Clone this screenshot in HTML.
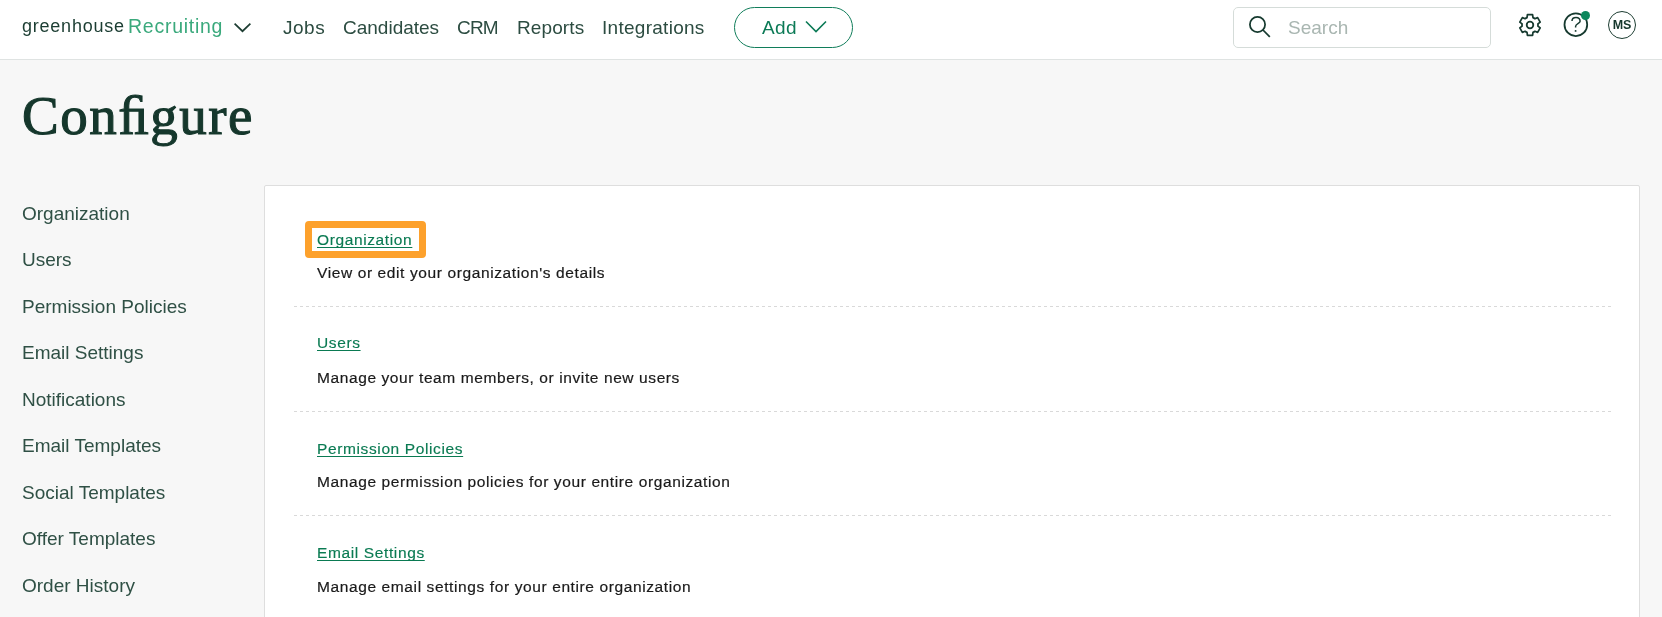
<!DOCTYPE html>
<html><head><meta charset="utf-8">
<style>
*{margin:0;padding:0;box-sizing:border-box}
html,body{width:1662px;height:617px;overflow:hidden;background:#f7f7f7;-webkit-font-smoothing:antialiased;font-family:"Liberation Sans",sans-serif}
.abs{position:absolute;white-space:nowrap;will-change:transform}
#hdr{position:absolute;left:0;top:0;width:1662px;height:60px;background:#fff;border-bottom:1px solid #dfe3e2}
.nav{font-size:19px;color:#2c4c41;line-height:22px;letter-spacing:0.1px}
.side{font-size:19px;color:#2f5045;line-height:22px;letter-spacing:0px}
#card{position:absolute;left:264px;top:185px;width:1376px;height:460px;background:#fff;border:1px solid #dedede;border-radius:2px}
.lnk{font-size:15.5px;color:#0a7a52;-webkit-text-stroke:0.15px #0a7a52;text-decoration:underline;text-underline-offset:2px;text-decoration-skip-ink:none;line-height:18px;letter-spacing:0.62px}
.dsc{font-size:15.5px;color:#1a1a1a;-webkit-text-stroke:0.2px #1a1a1a;line-height:18px;letter-spacing:0.61px}
.dash{position:absolute;left:294px;width:1318px;height:1px;background:repeating-linear-gradient(to right,#d9d9d9 0 3px,transparent 3px 6px)}
</style></head><body>
<div id="hdr">
  <div class="abs" style="left:22px;top:15px;font-size:18px;line-height:22px;color:#1b3d32;letter-spacing:0.77px">greenhouse</div>
  <div class="abs" style="left:128px;top:15px;font-size:19.5px;line-height:23px;color:#3aa97c;letter-spacing:0.74px">Recruiting</div>
  <svg class="abs" style="left:232px;top:20px" width="22" height="16" viewBox="0 0 22 16"><path d="M2.6 3.6 L10.5 11.2 L18.4 3.6" fill="none" stroke="#1d3d32" stroke-width="1.7"/></svg>
  <div class="abs nav" style="left:283px;top:17px;letter-spacing:0.5px">Jobs</div>
  <div class="abs nav" style="left:343px;top:17px;letter-spacing:0px">Candidates</div>
  <div class="abs nav" style="left:457px;top:17px;letter-spacing:-0.8px">CRM</div>
  <div class="abs nav" style="left:517px;top:17px">Reports</div>
  <div class="abs nav" style="left:602px;top:17px;letter-spacing:0.28px">Integrations</div>
  <div class="abs" style="left:734px;top:7px;width:119px;height:41px;border:1.3px solid #107d5a;border-radius:21px"></div>
  <div class="abs" style="left:762px;top:17px;font-size:19px;line-height:22px;color:#0b7a56;letter-spacing:0.4px">Add</div>
  <svg class="abs" style="left:803px;top:18px" width="26" height="18" viewBox="0 0 26 18"><path d="M3 3.5 L13 13.5 L23 3.5" fill="none" stroke="#0b7a56" stroke-width="1.6"/></svg>
  <div class="abs" style="left:1233px;top:7px;width:258px;height:41px;border:1px solid #d5dcd9;border-radius:5px"></div>
  <svg class="abs" style="left:1245px;top:12px" width="30" height="30" viewBox="0 0 30 30"><circle cx="12.5" cy="12.5" r="7.6" fill="none" stroke="#163a2f" stroke-width="1.75"/><path d="M18 18 L24.8 24.8" stroke="#163a2f" stroke-width="1.75"/></svg>
  <div class="abs" style="left:1288px;top:17px;font-size:19px;line-height:22px;color:#a9b6b1;letter-spacing:0px">Search</div>
  <svg class="abs" style="left:1515px;top:10px" width="30" height="30" viewBox="0 0 30 30"><path d="M12.00 7.58 L12.44 4.71 L17.56 4.71 L18.00 7.58 A8.0 8.0 0 0 1 19.93 8.70 L22.63 7.64 L25.19 12.08 L22.92 13.89 A8.0 8.0 0 0 1 22.92 16.11 L25.19 17.92 L22.63 22.36 L19.93 21.30 A8.0 8.0 0 0 1 18.00 22.42 L17.56 25.29 L12.44 25.29 L12.00 22.42 A8.0 8.0 0 0 1 10.07 21.30 L7.37 22.36 L4.81 17.92 L7.08 16.11 A8.0 8.0 0 0 1 7.08 13.89 L4.81 12.08 L7.37 7.64 L10.07 8.70 A8.0 8.0 0 0 1 12.00 7.58 Z" fill="none" stroke="#163a2f" stroke-width="1.75" stroke-linejoin="round"/><circle cx="15" cy="15" r="3.3" fill="none" stroke="#163a2f" stroke-width="1.8"/></svg>
  <svg class="abs" style="left:1560px;top:9px" width="32" height="32" viewBox="0 0 32 32"><circle cx="15.85" cy="15.7" r="11.35" fill="none" stroke="#163a2f" stroke-width="1.8"/><path d="M12 11.9 C12 9.8 13.8 8.4 16 8.4 C18.4 8.4 20.1 10 20.1 12.2 C20.1 14.6 15.6 14.8 15.6 17.4 L15.6 18.6" fill="none" stroke="#163a2f" stroke-width="1.5"/><circle cx="15.6" cy="21.9" r="0.95" fill="#163a2f"/><circle cx="25.5" cy="6.5" r="4.5" fill="#0d875c"/></svg>
  <div class="abs" style="left:1608px;top:11px;width:28px;height:28px;border:1.2px solid #1d3d32;border-radius:50%"></div>
  <div class="abs" style="left:1608px;top:18px;width:28px;text-align:center;font-size:12.5px;font-weight:bold;line-height:15px;color:#15372c">MS</div>
</div>
<div class="abs" style="left:21.5px;top:84px;font-family:'Liberation Serif',serif;font-size:55px;line-height:64px;color:#15372c;-webkit-text-stroke:1.1px #15372c;letter-spacing:1.5px">Con&#xFB01;gure</div>
<div class="abs side" style="left:22px;top:203px">Organization</div>
<div class="abs side" style="left:22px;top:249px">Users</div>
<div class="abs side" style="left:22px;top:296px">Permission Policies</div>
<div class="abs side" style="left:22px;top:342px">Email Settings</div>
<div class="abs side" style="left:22px;top:389px">Notifications</div>
<div class="abs side" style="left:22px;top:435px">Email Templates</div>
<div class="abs side" style="left:22px;top:482px">Social Templates</div>
<div class="abs side" style="left:22px;top:528px">Offer Templates</div>
<div class="abs side" style="left:22px;top:575px">Order History</div>
<div id="card"></div>
<div class="abs" style="left:305px;top:221px;width:121px;height:37px;border:7px solid #fda12c;border-radius:4px"></div>
<div class="abs lnk" style="left:317px;top:231px">Organization</div>
<div class="abs dsc" style="left:317px;top:264px">View or edit your organization's details</div>
<div class="dash" style="top:306px"></div>
<div class="abs lnk" style="left:317px;top:334px">Users</div>
<div class="abs dsc" style="left:317px;top:369px;letter-spacing:0.6px">Manage your team members, or invite new users</div>
<div class="dash" style="top:411px"></div>
<div class="abs lnk" style="left:317px;top:440px">Permission Policies</div>
<div class="abs dsc" style="left:317px;top:473px">Manage permission policies for your entire organization</div>
<div class="dash" style="top:515px"></div>
<div class="abs lnk" style="left:317px;top:544px">Email Settings</div>
<div class="abs dsc" style="left:317px;top:578px">Manage email settings for your entire organization</div>
</body></html>
